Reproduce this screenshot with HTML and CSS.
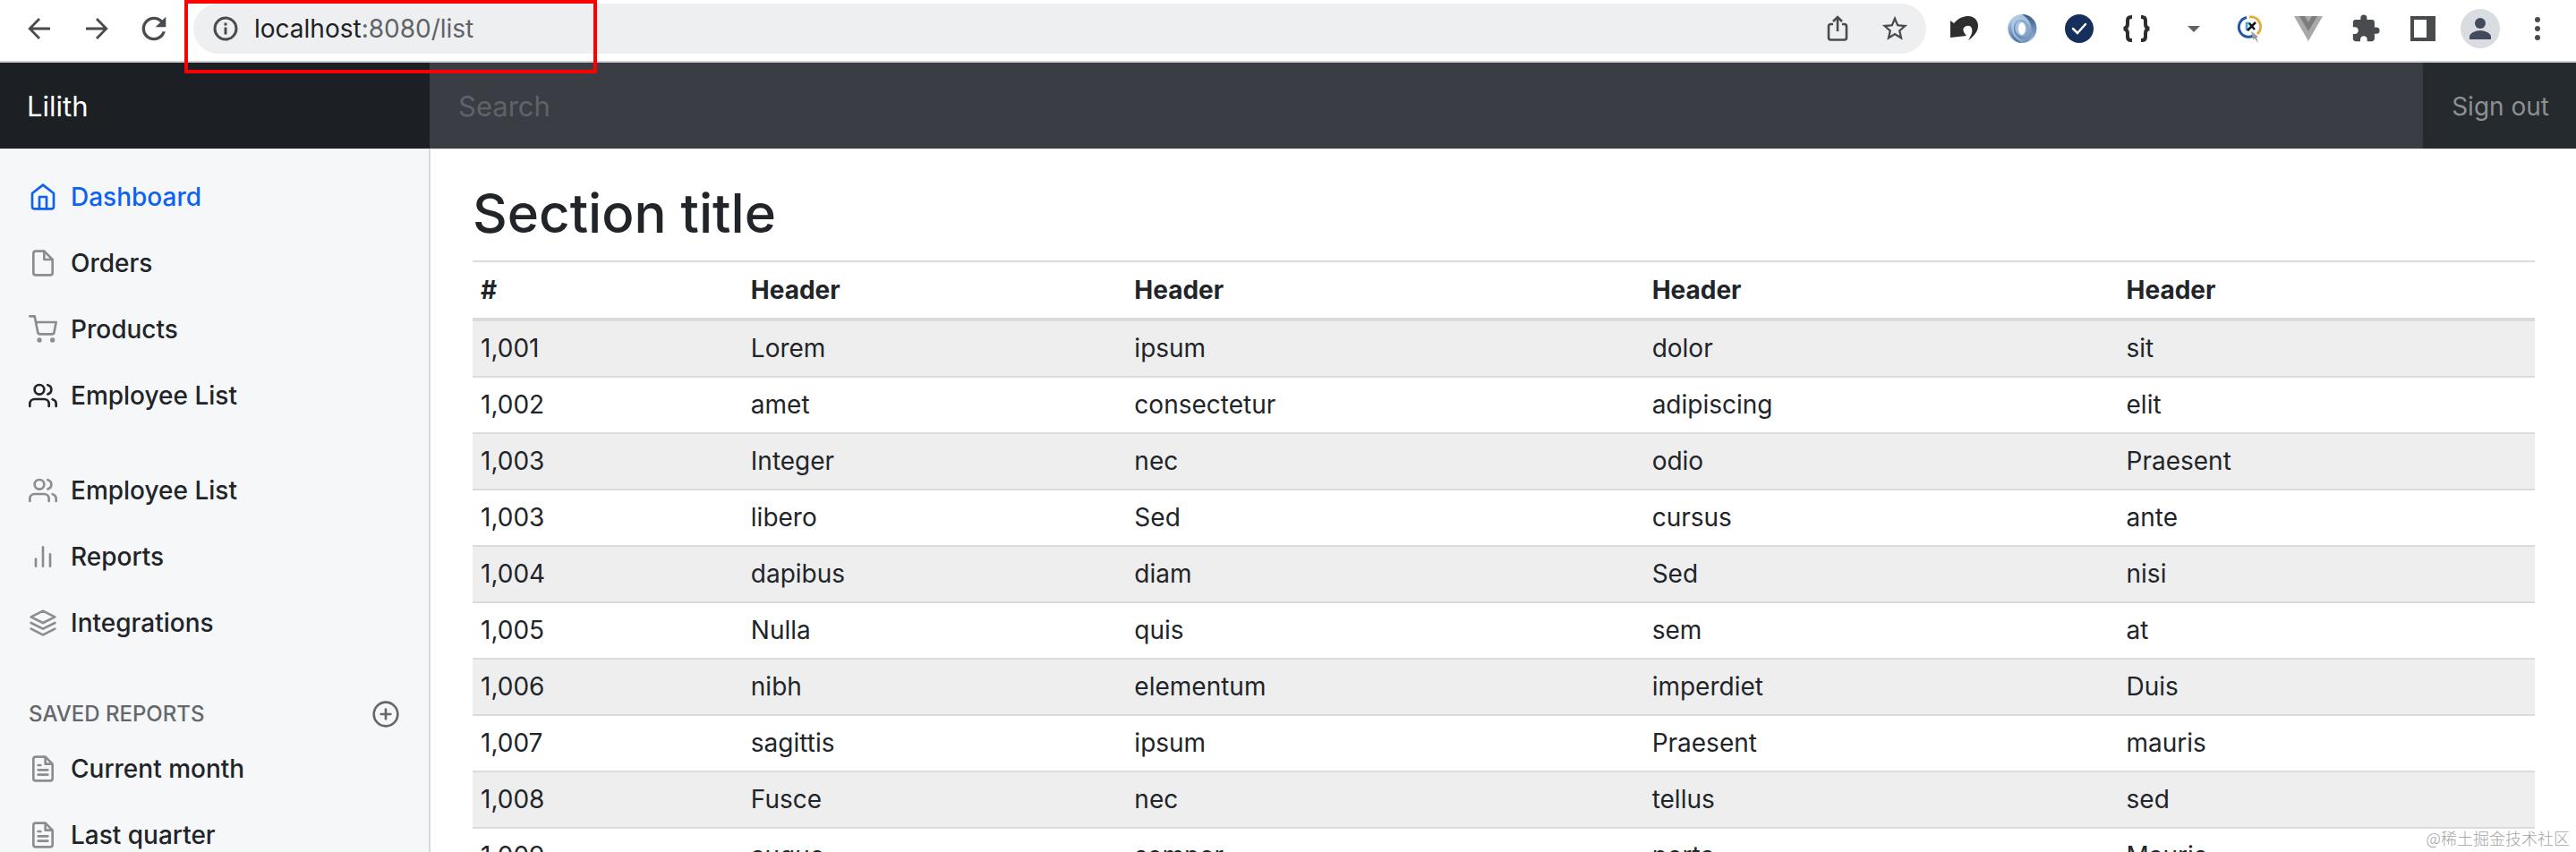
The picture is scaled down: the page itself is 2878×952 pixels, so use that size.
FILE: index.html
```html
<!DOCTYPE html>
<html lang="en">
<head>
    <meta charset="UTF-8">
    <meta name="viewport" content="width=device-width, initial-scale=1.0">
    <title>Lilith</title>
    <link rel="stylesheet" href="styles.css">
</head>
<body>
    <div class="browser-bar">
        <div class="nav-buttons">
            <button type="button" aria-label="Back"><svg width="34" height="34" viewBox="0 0 24 24"><path fill="currentColor" d="M20.5 11H6.8l5.9-6L11.300 3.600 3 12l8.300 8.400 1.400-1.400-5.900-6h13.700z"/></svg></button>
            <button type="button" aria-label="Forward"><svg width="34" height="34" viewBox="0 0 24 24"><path fill="currentColor" d="M3.5 11h13.700l-5.900-6 1.400-1.400L21 12l-8.300 8.400-1.400-1.400 5.900-6H3.5z"/></svg></button>
            <button type="button" aria-label="Reload"><svg width="40" height="40" viewBox="0 0 24 24"><path fill="currentColor" d="M17.65 6.35C16.2 4.9 14.21 4 12 4c-4.42 0-7.99 3.58-7.99 8s3.57 8 7.99 8c3.73 0 6.84-2.55 7.73-6h-2.08c-.82 2.33-3.04 4-5.65 4-3.31 0-6-2.69-6-6s2.69-6 6-6c1.66 0 3.14.69 4.22 1.78L13 11h7V4z"/></svg></button>
        </div>
        <div class="address">
            <svg class="info-icon" width="28" height="28" viewBox="0 0 28 28" fill="none" stroke="currentColor" stroke-width="3"><circle cx="14" cy="14" r="12"/><path d="M14 12.500v8M14 7.500v3"/></svg>
            <span class="url">localhost<span class="url-path">:8080/list</span></span>
            <button type="button" aria-label="Share"><svg width="28" height="32" viewBox="0 0 28 32" fill="none" stroke="currentColor" stroke-width="2.600"><path d="M9 11H6.500Q4 11 4 13.500v12.500Q4 28.500 6.500 28.500h15Q24 28.500 24 26V13.500Q24 11 21.500 11H19M14 19V3M9 8l5-5 5 5"/></svg></button>
            <button type="button" aria-label="Bookmark"><svg width="34" height="34" viewBox="0 0 24 24"><path fill="currentColor" d="M22 9.24l-7.19-.62L12 2 9.19 8.63 2 9.24l5.46 4.73L5.82 21 12 17.27 18.18 21l-1.63-7.03zM12 15.4l-3.76 2.27 1-4.28-3.32-2.88 4.38-.38L12 6.1l1.71 4.04 4.38.38-3.32 2.88 1 4.28z"/></svg></button>
        </div>
        <div class="extensions">
            <button type="button" aria-label="Undo"><svg width="34" height="34" viewBox="0 0 34 34"><path fill="#2d2e30" d="M1 8l4 3C10 5 16 3 21 3c7 0 11 5 11 11 0 6-5 12-11 16 4-6 5-10 4-13-1-4-6-4-9-1-1 2-1 4 3 9L1 27z"/></svg></button>
            <button type="button" aria-label="JSON formatter">
                <svg width="34" height="34" viewBox="0 0 34 34">
                    <defs>
                        <linearGradient id="ring-a" x1="0" y1="0" x2="1" y2="1"><stop offset="0" stop-color="#b9cfe6"/><stop offset="0.500" stop-color="#a3bedb"/><stop offset="1" stop-color="#4f77a6"/></linearGradient>
                        <linearGradient id="ring-b" x1="0" y1="0" x2="0" y2="1"><stop offset="0" stop-color="#345987"/><stop offset="1" stop-color="#9dbbdc"/></linearGradient>
                        <linearGradient id="ring-c" x1="0" y1="0" x2="0" y2="1"><stop offset="0" stop-color="#c9daec"/><stop offset="1" stop-color="#3f6899"/></linearGradient>
                    </defs>
                    <circle cx="17" cy="17" r="16" fill="url(#ring-a)"/>
                    <path fill="url(#ring-b)" d="M17 1a16 16 0 0 1 6 31c7-7 8-22-6-31z"/>
                    <path fill="url(#ring-c)" d="M11 2C3 8 2 25 17 33 4 33-6 12 11 2z"/>
                    <path fill="#5f86b4" d="M17 7C5 9 7 27 22 27c-4 3-14 0-14-10 0-6 4-10 9-10z"/>
                    <path fill="#87a8cd" d="M12 8c9-4 18 7 9 19 4-8 3-16-9-19z"/>
                    <ellipse cx="17" cy="17" rx="4" ry="7" fill="#fff"/>
                </svg>
            </button>
            <button type="button" aria-label="Checker"><svg width="34" height="34" viewBox="0 0 34 34" fill="none"><circle cx="17" cy="17" r="16" fill="#172f5c"/><path d="M10 17l5 5 9-10" stroke="#fff" stroke-width="2.500" stroke-linecap="round"/></svg></button>
            <button type="button" aria-label="JSON viewer"><svg width="34" height="34" viewBox="0 0 34 34" fill="none" stroke="#2c2c2c" stroke-width="4"><path d="M12 4h-1Q7 4 7 8v4q0 4-4 5 4 1 4 5v4q0 4 4 4h1M22 4h1q4 0 4 4v4q0 4 4 5-4 1-4 5v4q0 4-4 4h-1"/></svg></button>
            <button type="button" aria-label="More"><svg width="34" height="34" viewBox="0 0 34 34"><path fill="#5f6368" d="M10 14h14l-7 7z"/></svg></button>
            <button type="button" aria-label="Search tool"><svg width="34" height="34" viewBox="0 0 34 34" fill="none"><path d="M12 4.500A11 11 0 1 0 21 24" stroke="#2456a5" stroke-width="3"/><path d="M15 4A11 11 0 0 1 24 23" stroke="#e9a93a" stroke-width="3"/><path d="M12 10v8M11 11h5M11 18h4" stroke="#3ba7e0" stroke-width="2.500"/><path d="M13 19l9-9M15 11l6 7" stroke="#111" stroke-width="2.500"/><path d="M17 20l8 6-2 1 2 6-4-5-2 1z" fill="#999"/></svg></button>
            <button type="button" aria-label="Vue devtools"><svg width="34" height="34" viewBox="0 0 34 34"><path fill="#a9a9a9" d="M1 3h32L17 31z"/><path fill="#7d7d7d" d="M7 3h20L17 20z"/><path fill="#a9a9a9" d="M13 3h8l-4 7z"/></svg></button>
            <button type="button" aria-label="Extensions"><svg width="34" height="34" viewBox="0 0 24 24"><path fill="#494c4f" d="M20.5 11H19V7c0-1.1-.9-2-2-2h-4V3.5a2.5 2.5 0 0 0-5 0V5H4c-1.1 0-1.99.9-1.99 2v3.8H3.5c1.49 0 2.7 1.21 2.7 2.7s-1.21 2.7-2.7 2.7H2V20c0 1.1.9 2 2 2h3.8v-1.5c0-1.49 1.21-2.7 2.7-2.7s2.7 1.21 2.7 2.7V22H17c1.1 0 2-.9 2-2v-4h1.5a2.5 2.5 0 0 0 0-5z"/></svg></button>
            <button type="button" aria-label="Side panel"><svg width="34" height="34" viewBox="0 0 34 34"><path fill="#494c4f" fill-rule="evenodd" d="M3 3h28v28H3zM7 7v20h14V7z"/></svg></button>
            <button type="button" aria-label="Profile"><svg class="avatar" width="44" height="44" viewBox="0 0 44 44"><circle cx="22" cy="22" r="22" fill="#d9dce1"/><circle cx="22" cy="16" r="6" fill="#434a5c"/><path fill="#434a5c" d="M10 34v-3c0-4 7-7 12-7s12 3 12 7v3z"/></svg></button>
            <button type="button" aria-label="Menu"><svg width="34" height="34" viewBox="0 0 34 34" fill="#494c4f"><circle cx="17" cy="7" r="3"/><circle cx="17" cy="17" r="3"/><circle cx="17" cy="27" r="3"/></svg></button>
        </div>
        <div class="highlight"></div>
    </div>

    <header class="navbar">
        <a class="brand" href="#">Lilith</a>
        <input class="search" type="text" placeholder="Search" aria-label="Search">
        <a class="sign-out" href="#">Sign out</a>
    </header>

    <!-- shared icon shapes -->
    <svg class="sprite" width="0" height="0">
        <symbol id="users" viewBox="0 0 24 24"><path d="M17 21v-2a4 4 0 0 0-4-4H5a4 4 0 0 0-4 4v2"/><circle cx="9" cy="7" r="4"/><path d="M23 21v-2a4 4 0 0 0-3-3.87M16 3.13a4 4 0 0 1 0 7.75"/></symbol>
        <symbol id="file-text" viewBox="0 0 24 24"><path d="M14 2H6a2 2 0 0 0-2 2v16a2 2 0 0 0 2 2h12a2 2 0 0 0 2-2V8zM14 2v6h6M16 13H8M16 17H8M10 9H8"/></symbol>
    </svg>

    <div class="container">
        <nav class="sidebar">
            <ul>
                <li><a class="active" href="#"><svg class="icon" viewBox="0 0 24 24"><path d="M3 9l9-7 9 7v11a2 2 0 0 1-2 2H5a2 2 0 0 1-2-2z"/><path d="M9 22V12h6v10"/></svg>Dashboard</a></li>
                <li><a href="#"><svg class="icon" viewBox="0 0 24 24"><path d="M13 2H6a2 2 0 0 0-2 2v16a2 2 0 0 0 2 2h12a2 2 0 0 0 2-2V9z"/><path d="M13 2v7h7"/></svg>Orders</a></li>
                <li><a href="#"><svg class="icon" viewBox="0 0 24 24"><circle cx="9" cy="21" r="1"/><circle cx="20" cy="21" r="1"/><path d="M1 1h4l2.68 13.39a2 2 0 0 0 2 1.61h9.72a2 2 0 0 0 2-1.61L23 6H6"/></svg>Products</a></li>
                <li><a href="#"><svg class="icon dark" viewBox="0 0 24 24"><use href="#users"/></svg>Employee List</a></li>
            </ul>
            <ul>
                <li><a href="#"><svg class="icon" viewBox="0 0 24 24"><use href="#users"/></svg>Employee List</a></li>
                <li><a href="#"><svg class="icon" viewBox="0 0 24 24"><path d="M18 20V10M12 20V4M6 20v-6"/></svg>Reports</a></li>
                <li><a href="#"><svg class="icon" viewBox="0 0 24 24"><path d="M12 2L2 7l10 5 10-5zM2 17l10 5 10-5M2 12l10 5 10-5"/></svg>Integrations</a></li>
            </ul>
            <h6 class="sidebar-heading">
                <span>Saved reports</span>
                <a href="#" aria-label="Add a new report"><svg class="icon" viewBox="0 0 24 24"><circle cx="12" cy="12" r="10"/><path d="M12 8v8M8 12h8"/></svg></a>
            </h6>
            <ul>
                <li><a href="#"><svg class="icon" viewBox="0 0 24 24"><use href="#file-text"/></svg>Current month</a></li>
                <li><a href="#"><svg class="icon" viewBox="0 0 24 24"><use href="#file-text"/></svg>Last quarter</a></li>
            </ul>
        </nav>

        <main>
            <h2>Section title</h2>
            <table>
                <thead>
                    <tr><th class="col-id">#</th><th class="col-a">Header</th><th class="col-b">Header</th><th class="col-c">Header</th><th>Header</th></tr>
                </thead>
                <tbody>
                    <tr><td>1,001</td><td>Lorem</td><td>ipsum</td><td>dolor</td><td>sit</td></tr>
                    <tr><td>1,002</td><td>amet</td><td>consectetur</td><td>adipiscing</td><td>elit</td></tr>
                    <tr><td>1,003</td><td>Integer</td><td>nec</td><td>odio</td><td>Praesent</td></tr>
                    <tr><td>1,003</td><td>libero</td><td>Sed</td><td>cursus</td><td>ante</td></tr>
                    <tr><td>1,004</td><td>dapibus</td><td>diam</td><td>Sed</td><td>nisi</td></tr>
                    <tr><td>1,005</td><td>Nulla</td><td>quis</td><td>sem</td><td>at</td></tr>
                    <tr><td>1,006</td><td>nibh</td><td>elementum</td><td>imperdiet</td><td>Duis</td></tr>
                    <tr><td>1,007</td><td>sagittis</td><td>ipsum</td><td>Praesent</td><td>mauris</td></tr>
                    <tr><td>1,008</td><td>Fusce</td><td>nec</td><td>tellus</td><td>sed</td></tr>
                    <tr><td>1,009</td><td>augue</td><td>semper</td><td>porta</td><td>Mauris</td></tr>
                </tbody>
            </table>
        </main>
    </div>
    <div class="watermark">@稀土掘金技术社区</div>
</body>
</html>
```

FILE: styles.css
```css
* {
    box-sizing: border-box;
}
body {
    margin: 0;
    height: 100vh;
    overflow: hidden;
    display: flex;
    flex-direction: column;
    font-family: Inter, "Liberation Sans", sans-serif;
    font-size: 28px;
    line-height: 42px;
    color: #212529;
    background-color: #fff;
}
a {
    color: inherit;
    text-decoration: none;
}
button {
    display: flex;
    align-items: center;
    justify-content: center;
    padding: 0;
    border: none;
    background: none;
    color: #494c4f;
    cursor: pointer;
}

/* browser toolbar */
.browser-bar {
    position: relative;
    flex: none;
    display: flex;
    align-items: center;
    height: 70px;
    padding: 0 26px 4px 24px;
    border-bottom: 2px solid #cfd0d3;
}
.nav-buttons {
    display: flex;
    gap: 24px;
    width: 192px;
}
.nav-buttons button {
    width: 40px;
}
.address {
    flex: 1;
    display: flex;
    align-items: center;
    height: 56px;
    padding: 0 18px 0 22px;
    border-radius: 28px;
    background-color: #eeeff1;
}
.info-icon {
    color: #494c4f;
}
.url {
    flex: 1;
    margin-left: 18px;
    color: #202124;
}
.url-path {
    color: #5f6368;
}
.address button {
    width: 34px;
    margin-left: 30px;
}
.extensions {
    display: flex;
    align-items: center;
    gap: 30px;
    margin-left: 26px;
}
.extensions button {
    width: 34px;
    height: 44px;
}
.avatar {
    flex: none;
}
.highlight {
    position: absolute;
    top: 0;
    left: 206px;
    width: 461px;
    height: 82px;
    border: 4px solid #f00;
}

/* page header */
.navbar {
    flex: none;
    display: flex;
    height: 96px;
    background-color: #212529;
}
.brand {
    width: 480px;
    padding: 28px 30px;
    background-color: #1c1f23;
    color: #fff;
    font-size: 31px;
}
.search {
    flex: 1;
    min-width: 0;
    padding: 2px 32px 0;
    border: none;
    background-color: #3a3d44;
    color: #fff;
    font: inherit;
    font-size: 31px;
}
.search::placeholder {
    color: #5f6369;
    opacity: 1;
}
.sign-out {
    padding: 28px 30px 28px 32px;
    background-color: #252a2f;
    color: #8d9093;
}

.sprite {
    position: absolute;
}
.container {
    flex: 1;
    min-height: 0;
    display: flex;
}

/* sidebar */
.sidebar {
    flex: none;
    width: 481px;
    padding-top: 17px;
    border-right: 2px solid #d7d9db;
    background-color: #f6f7f9;
}
.sidebar ul {
    margin: 0 0 32px;
    padding: 0;
    list-style: none;
}
.sidebar li a {
    display: flex;
    align-items: center;
    gap: 15px;
    height: 74px;
    padding: 0 32px;
    font-weight: 500;
}
.sidebar li .active {
    color: #0d62f0;
}
.icon {
    width: 32px;
    height: 32px;
    fill: none;
    stroke: #8b8d8f;
    stroke-width: 2;
    stroke-linecap: round;
    stroke-linejoin: round;
}
.active .icon {
    stroke: currentColor;
}
.icon.dark {
    stroke: #212529;
}
.sidebar-heading {
    display: flex;
    align-items: center;
    justify-content: space-between;
    margin: 44px 0 3px;
    padding: 0 32px;
    font-size: 24px;
    font-weight: 500;
    text-transform: uppercase;
    color: #64686c;
}
.sidebar-heading a {
    display: flex;
}
.sidebar-heading .icon {
    stroke: #64686c;
}

/* content */
main {
    flex: 1;
    padding: 34px 46px 0 47px;
}
h2 {
    margin: 0 0 14px;
    font-size: 60px;
    font-weight: 500;
    line-height: 77px;
}
table {
    width: 100%;
    table-layout: fixed;
    border-collapse: separate;
    border-spacing: 0;
}
th,
td {
    padding: 10px 9px;
    border-top: 2px solid #d9dbdd;
    line-height: 41px;
    text-align: left;
}
th {
    border-bottom: 2px solid #d9dbdd;
    line-height: 42px;
    font-weight: 700;
}
tbody tr:nth-child(odd) {
    background-color: #eee;
}
.col-id {
    width: 13.1%;
}
.col-a {
    width: 18.6%;
}
.col-b {
    width: 25.1%;
}
.col-c {
    width: 23%;
}
.watermark {
    position: absolute;
    right: 7px;
    bottom: 3px;
    font-family: "Noto Sans CJK SC", sans-serif;
    font-size: 18px;
    font-weight: 300;
    line-height: 26px;
    color: #a5a5a5;
}
```
